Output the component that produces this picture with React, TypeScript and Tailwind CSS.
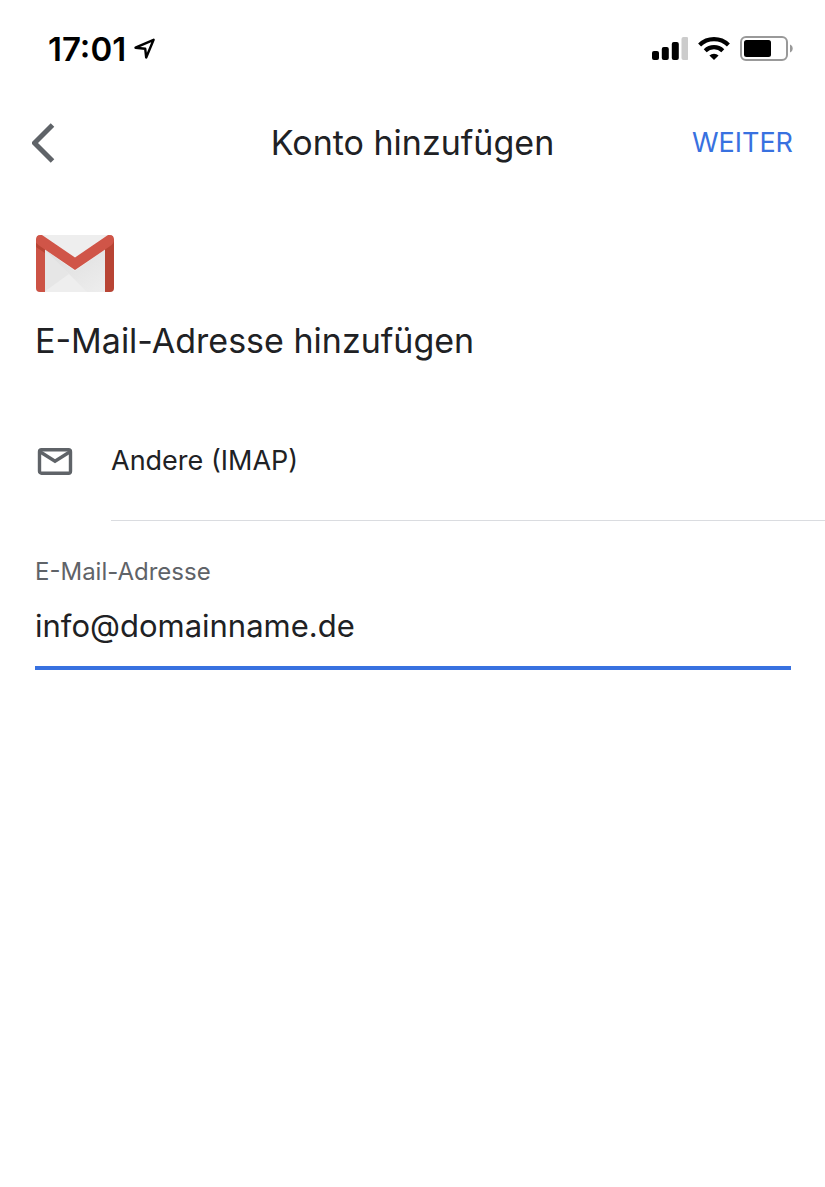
import React from "react";

const StatusBar = () => {
  return (
    <div className="flex h-[98px] items-center justify-between pl-12 pr-8">
      <div className="flex items-center gap-2 text-black">
        <span className="text-[33px] leading-10 font-semibold">17:01</span>
        <svg width="22" height="22" viewBox="0 0 22 22" fill="none">
          <path
            d="M1.5 9.7 19.600 1.800 12.200 19.500l-1-8.800z"
            stroke="currentColor"
            strokeWidth="2.4"
            strokeLinejoin="round"
          />
        </svg>
      </div>

      <div className="flex items-center gap-[10px]">
        {/* signal */}
        <svg width="36" height="24" viewBox="0 0 36 24">
          <rect x="0" y="14" width="7" height="9" rx="2" />
          <rect x="9.800" y="10" width="7" height="13" rx="2" />
          <rect x="19.800" y="5" width="7" height="18" rx="2" />
          <rect x="29.500" y="0" width="7" height="23" rx="2" fill="#cccccc" />
        </svg>
        {/* wifi */}
        <svg width="32" height="24" viewBox="0 0 32 24" fill="none">
          <path d="M1.600 8a20.600 20.600 0 0 1 28.800 0" stroke="black" strokeWidth="4.2" />
          <path d="M7.200 13.800a12.600 12.600 0 0 1 17.600 0" stroke="black" strokeWidth="4.2" />
          <path d="M11.400 18.500a6.700 6.700 0 0 1 9.200 0L16 23z" fill="black" />
        </svg>
        {/* battery */}
        <svg width="53" height="26" viewBox="0 0 53 26">
          <rect x="1" y="1" width="46" height="23" rx="5" fill="none" stroke="#999999" strokeWidth="2" />
          <rect x="4" y="4" width="27" height="17" rx="2.5" />
          <path d="M50 8.5c3.6 1.3 3.6 6.7 0 8z" fill="#999999" />
        </svg>
      </div>
    </div>
  );
};

const NavBar = () => {
  return (
    <header className="grid h-[90px] grid-cols-[1fr_auto_1fr] items-center px-8">
      <button type="button" aria-label="Zurück" className="justify-self-start text-[#5f6368]">
        <svg width="24" height="40" viewBox="0 0 24 40" fill="none">
          <path d="M20.500 2 2.500 20l18 18" stroke="currentColor" strokeWidth="5" />
        </svg>
      </button>
      <h1 className="text-[34px] leading-10">Konto hinzufügen</h1>
      <button type="button" className="justify-self-end text-[27px] leading-10 text-[#3871e0]">
        WEITER
      </button>
    </header>
  );
};

const GmailLogo = () => {
  return (
    <svg width="80" height="58" viewBox="0 0 80 58">
      <defs>
        <clipPath id="envelope">
          <rect x="1" y="0" width="78" height="57" rx="4" />
        </clipPath>
        <linearGradient id="fold" x1="0" y1="0" x2="1" y2="1">
          <stop offset="0" stopColor="#d0d0d0" />
          <stop offset="1" stopColor="#eeeeee" />
        </linearGradient>
      </defs>
      <g clipPath="url(#envelope)">
        <rect width="80" height="58" fill="#eeeeee" />
        <path d="M9 14 34 39 9 57z" fill="#e6e6e6" />
        <path d="M9 14 40 36 71 14v43H52L34 39z" fill="url(#fold)" opacity="0.6" />
        <path d="M1 4h9v53H1z" fill="#cc5345" />
        <path d="M70 4h9v53h-9z" fill="#b84434" />
        <path d="M1 8v4l9 6v-5z" fill="#b84434" />
        <path
          d="M1 4C1 0 5-2 8.500 1L40 22.500 71.500 1C75-2 79 0 79 4c0 3-1 5-3 6.500L40 35 4 10.500C2 9 1 7 1 4z"
          fill="#d05548"
        />
      </g>
    </svg>
  );
};

const EmailField = () => {
  return (
    <div className="flex flex-col pt-[31px] pr-[34px] pl-[35px]">
      <label htmlFor="email" className="text-2xl leading-10 text-[#5f6368]">
        E-Mail-Adresse
      </label>
      <input
        id="email"
        type="email"
        defaultValue="info@domainname.de"
        className="h-[78px] w-full border-b-4 border-[#3871e0] pb-2 text-[31px] outline-none"
      />
    </div>
  );
};

const App: React.FC = () => {
  return (
    <main className="min-h-screen bg-white font-['Inter','Liberation_Sans',sans-serif] text-[#202124]">
      <StatusBar />
      <NavBar />

      <section className="flex flex-col gap-7 pt-[47px] pl-[35px]">
        <GmailLogo />
        <h2 className="text-[34px] leading-10">E-Mail-Adresse hinzufügen</h2>
      </section>

      {/* account type */}
      <div className="mt-[41px] flex items-center pl-[37px]">
        <svg width="36" height="28" viewBox="0 0 36 28" fill="none" stroke="#5f6368" strokeWidth="3.400">
          <rect x="2.500" y="1.700" width="31" height="23.500" rx="2" />
          <path d="m3 3.700 15 9.500 15-9.500" />
        </svg>
        <div className="ml-[38px] flex h-[119px] flex-1 items-center border-b border-[#dadce0] text-[27px]">
          Andere (IMAP)
        </div>
      </div>

      <EmailField />
    </main>
  );
};

export default App;
